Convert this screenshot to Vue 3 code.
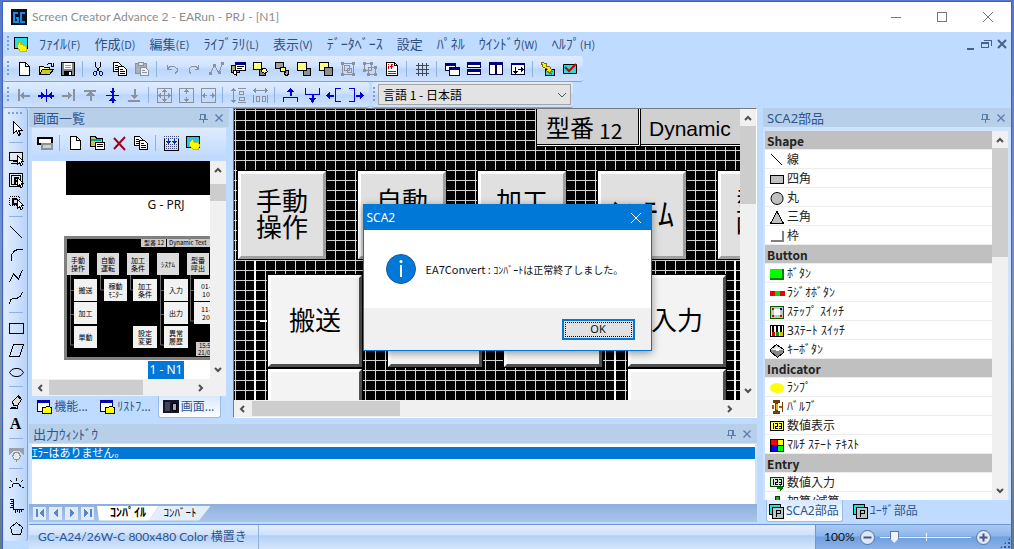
<script setup>
import { h, ref } from 'vue'

const K = '#000'
const G = '#8b929c'
const B = '#0000d8'
const N = 'none'
const Y = '#ffff80'

// Each glyph is a list of [path, fill, stroke, width, dash] on a 16 by 16 grid.
const cursor = ['M9.5 5.5v9l2-2 1.5 3 1.5-1-1-3h2z', '#fff', K]
const glyphs = {
  app: [['M0 0h16v16H0z', '#06101f'], ['M7 3.5H2.5v9H6.5V8.5H4.5M14 3.5H9.5v9H14', N, '#1d8be0', 2]],
  doc: [['M1.5 1.5h13v11h-13z', '#20e0e0', K], ['M4.5 9.5l2-4h1v3l5 1 1 2v4h-6l-3-4z', '#ff0', '#c0c000']],
  new: [['M3.5 1.5h6l4 4v9h-10z', '#fff', K], ['M9.5 1.5v4h4', N, K]],
  open: [['M1.5 13.5v-8h4l1 1h5v3', Y, K], ['M1.5 13.5l3-5h11l-4 5z', '#c8c840', K], ['M9 3.5l2-1h2l1 2M15.5 2v3h-3', N, K]],
  save: [['M1.5 1.5h13v13h-13z', '#80848c', K], ['M4 2h8v6H4z', '#fff'], ['M5 4h6v1H5zM5 6h6v1H5z', '#999'], ['M4 10h8v4H4z', K], ['M9 11h2v3H9z', '#fff']],
  cut: [['M5.5 1v4l4 6M10.5 1v4l-4 6', N, K], ['M4.5 10.5h2v3l-1 1h-1l-1-1v-2zM9.5 10.5h2l1 1v2l-1 1h-1l-1-1z', N, '#000090']],
  copy: [['M1.5 1.5h5l3 3v6h-8z', '#fff', K], ['M3 4.5h3M3 6.5h4M3 8.5h4', N, K], ['M6.5 5.5h5l3 3v6h-8z', '#fff', K], ['M8 8.5h3M8 10.5h5M8 12.5h5', N, K]],
  paste: [['M1.5 2.5h11v10h-11z', '#aab0b8', G], ['M4.5 1.5h5v3h-5z', '#dde', G], ['M6.5 6.5h5l3 3v5h-8z', '#eef', G], ['M8 9.5h3M8 11.5h5', N, G]],
  undo: [['M3.5 4v4h4M4 7.5l2-2h4l3 2v3l-2 2', N, G]],
  redo: [['M12.5 4v4h-4M12 7.5l-2-2H6l-3 2v3l2 2', N, G]],
  poly: [['M3 12L6 4l5 8 3-9', N, G], ['M1 11h3v3H1zM5 3h3v3H5zM10 10h3v3h-3zM13 1h3v3h-3z', G]],
  props: [['M1.5 4.5h8v7h-8z', '#a8a878', K], ['M3.5 9.5h3v5l-3-2z', '#fff', K], ['M5.5 1.5h10v8h-10z', '#fff', K], ['M5 1h11v3H5z', '#000080'], ['M7 5.5h7M7 7.5h5', N, K]],
  front1: [['M7.5 8.5h6v6h-6z', '#808080', K], ['M1.5 1.5h8v7h-8z', Y, K], ['M10.5 7.5h3l2 3-3 2-3-2z', Y, K]],
  back1: [['M1.5 1.5h8v6h-8z', '#a0a0a0', K], ['M6.5 6.5h5v4h-5z', Y, K], ['M11.5 9.5h3v4l-2 1-2-1z', '#a0a0a0', K]],
  front2: [['M7.5 7.5h7v7h-7z', '#909090', K], ['M1.5 1.5h9v8h-9z', Y, K]],
  back2: [['M1.5 1.5h9v8h-9z', Y, K], ['M6.5 6.5h8v8h-8z', '#909090', K]],
  group: [['M2.5 2.5h11v11h-11z', N, G], ['M4.5 4.5h5v5h-5zM7.5 7.5h4v4h-4z', N, G], ['M1 1h3v3H1zM12 1h3v3h-3zM1 12h3v3H1zM12 12h3v3h-3z', G]],
  ungroup: [['M2.5 2.5h7v7h-7zM6.5 6.5h7v7h-7z', N, G], ['M1 1h3v3H1zM8 1h3v3H8zM1 8h3v3H1zM12 5h3v3h-3zM5 12h3v3H5zM12 12h3v3h-3z', G]],
  ifdoc: [['M2.5 1.5h8l3 3v10h-11z', '#fff', K], ['M10.5 1.5v3h3', N, K], ['M4.5 5v3M4.5 3v1M7.5 8V3.5H9M6 5.5h3M4 10.5h8M4 12.5h8', N, '#d00000']],
  grid: [['M2 4.5h13M2 8.5h13M2 12.5h13M4.5 2v13M8.5 2v13M12.5 2v13', N, '#404850']],
  cascade: [['M1.5 2.5h10v7h-10z', '#fff', '#000040'], ['M1 2h11v3H1z', '#000080'], ['M5.5 6.5h10v8h-10z', '#fff', '#000040'], ['M5 6h11v3H5z', '#000080']],
  tileh: [['M1.5 1.5h13v5h-13zM1.5 8.5h13v5h-13z', '#fff', '#000040'], ['M1 1h14v3H1zM1 8h14v3H1z', '#000080']],
  tilev: [['M1.5 1.5h6v12h-6zM8.5 1.5h6v12h-6z', '#fff', '#000040'], ['M1 1h7v3H1zM8 1h7v3H8z', '#000080']],
  fit: [['M1.5 2.5h13v11h-13z', '#fff', '#000040'], ['M1 2h14v2H1z', '#000080'], ['M5.5 6v6M3.5 10l2 2 2-2M8 8.5h5M11 6.5l2 2-2 2', N, K]],
  compile: [['M5.5 8.5h9v6h-9z', '#30d8d8', K], ['M1.5 1.5l5 1v3l3 0 3 5h-2l1 3-5-4 1-1-5-3z', '#ffee00', '#807000']],
  check: [['M1.5 3.5h13v9h-13z', '#30d8d8', K], ['M3 6l4 4 7-7', N, '#d00000', 2]],
  left: [['M2.5 2v12M5 8.5h9', N, G, 2], ['M4 8.5l4-4v8z', G]],
  hcenter: [['M8.5 2v13', N, B], ['M0 8.5h16', N, B, 2], ['M7 8.5L3 5v7zM10 8.5l4-3.5v7z', B]],
  right: [['M13.5 2v12M2 8.5h9', N, G, 2], ['M12 8.5L8 4.5v8z', G]],
  top: [['M2 3.5h12M8.5 5v9', N, G, 2], ['M8.5 4L4 9h9z', G]],
  vcenter: [['M2 8.5h13', N, B], ['M8.5 1v15', N, B, 2], ['M8.5 7L5 3.5h7zM8.5 10L5 13.5h7z', B]],
  bottom: [['M2 13.5h12M8.5 2v9', N, G, 2], ['M8.5 12L5 8h7z', G]],
  sizeb: [['M1.5 1.5h14v14h-14z', N, G], ['M8.5 3v11M3 8.5h11M6.5 5l2-2 2 2M6.5 12l2 2 2-2M5 6.5l-2 2 2 2M12 6.5l2 2-2 2', N, G]],
  sizev: [['M1.5 1.5h14v14h-14z', N, G], ['M8.5 3v4M8.5 10v4M6.5 5l2-2 2 2M6.5 12l2 2 2-2', N, G]],
  sizeh: [['M1.5 1.5h14v14h-14z', N, G], ['M3 8.5h4M10 8.5h4M5 6.5l-2 2 2 2M12 6.5l2 2-2 2', N, G]],
  spacev: [['M3.5 2v13M1.5 4l2-2 2 2M1.5 13l2 2 2-2M8 1.5h8M8 15.5h8M9.5 4.5h4v3h-4zM9.5 10.5h5v3h-5z', N, G]],
  spaceh: [['M2 3.5h13M4 1.5l-2 2 2 2M13 1.5l2 2-2 2M1.5 8v8M15.5 8v8M4.5 9.5h3v5h-3zM10.5 9.5h3v5h-3z', N, G]],
  outup: [['M1.5 15v-5h14v5', N, B], ['M8.5 9V3', N, B, 2], ['M8.5 1L5 5h7z', B]],
  outdown: [['M1.5 1v6h14V1', N, B], ['M8.5 8v5', N, B, 2], ['M8.5 16L5 11h7z', B]],
  outleft: [['M15 1.5H9.5v13H15', N, B], ['M8 8.5H3', N, B, 2], ['M0 8.5L4 5v7z', B]],
  outright: [['M1 1.5h5.5v13H1', N, B], ['M8 8.5h5', N, B, 2], ['M16 8.5L12 5v7z', B]],
  pointer: [['M5.5 1.5v12l3-3 2 5 2-1-2-4h4z', '#fff', K]],
  selscreen: [['M1.5 2.5h13v8h-13z', '#dfe8f5', K], ['M3 13.5h6M5 11.5h4', N, K], cursor],
  selpart: [['M1.5 1.5h13v13h-13zM3.5 3.5h9v9h-9z', '#dfe8f5', K], ['M6.5 12V5.5H10V8.5H7', N, K, 2], cursor],
  selc: [['M1.5 2.5h10v9h-10z', N, K, 1, '1 1'], ['M9 5H5v4.5h4', N, K, 2], cursor],
  line: [['M2 2l12 12', N, K]],
  arc: [['M3.5 15V9l3-4 4-2h4', N, K]],
  zigzag: [['M1.5 14l4-8 5 5 4-9', N, K]],
  curve: [['M1.5 14l1-4 3-2h4l3-2 2-4', N, K]],
  rect: [['M1.5 3.5h14v10h-14z', N, K]],
  para: [['M5.5 2.5h10l-4 12h-10z', N, K]],
  ellipse: [['M1.5 8.5L4 5.5l3-1h3l3 1 2.5 3-2.5 3-3 1H7l-3-1z', N, K]],
  fill: [['M4.5 7.5l5-5 4 3-4 6h-4z', '#ddd', K], ['M10 1.5l3 3M2 14.5h7v-3M3 13.5h5', N, K]],
  text: [],
  spray: [['M1 2h15v7l-5-4H6L1 9z', '#9aa0a8'], ['M6.5 6.5h4l2 4-2 3h-4l-2-3z', '#e8e8e8', G], ['M8.5 13v3', N, G]],
  gauge: [['M4 11l1-3 3-1 3 1 2 3M1 11.5h2M14 11.5h2M8.5 2v3M2 4l2 2M15 4l-2 2', N, K]],
  scale: [['M5.5 1v10.5H16', N, K], ['M2 1.5h3M3 3.5h2M2 5.5h3M3 7.5h2M2 9.5h3M7.5 12v3M9.5 12v2M11.5 12v3M13.5 12v2', N, K]],
  pentagon: [['M8.5 2.5l6 5-2 7h-8l-2-7z', N, K]],
  screens: [['M1 3h14v6H1z', '#fff', K, 2], ['M5 9h10v5H5z', '#d0d0d0', G, 2]],
  prop2: [['M1.5 1.5h5l1 2h6v8h-12z', '#c8c840', K], ['M2 4h10v2H2z', '#00a0a0'], ['M6.5 7.5h9v7h-9z', '#fff', K], ['M8 9.5h6M8 11.5h6', N, K]],
  del: [['M3 3l11 12M14 2L3 14', N, '#a00020', 2]],
  dots: [['M1 1.5h15M1 3.5h15M1 9.5h15M1 11.5h15M1 13.5h15', N, '#404880', 1, '1 1'], ['M1.5 4v11.5h14V4', N, K], ['M5.5 4v2M11.5 4v2', N, '#0030a0'], ['M3 6h5L5.5 9zM9 6h5l-2.5 3z', '#0030a0']],
  hand: [['M1.5 1.5h13v11h-13z', '#20c8e8', K], ['M4.5 7.5l3-3 2 3h4l1 3-1 4h-5l-4-4z', '#ff0', '#c0c000']],
  tree: [['M1.5 1.5h12v11h-12z', '#fff', '#000060'], ['M1 1h13v3H1z', '#0000b0'], ['M6.5 8.5h3l1-1h3l1 1h1v6h-9z', '#ff0', K]],
  screen: [['M0 1h16v13H0z', '#14142a'], ['M2 3h5v9H2z', '#445'], ['M9 4h5v8H9z', '#000'], ['M10 5h3v6h-3z', '#aab']],
  part: [['M1.5 1.5h11v10h-11z', '#20e0e0', K], ['M4.5 4.5h11v11h-11z', '#b8c8c8', K], ['M8.5 14V7.5H12V10.5H9', N, K]],
  sLine: [['M2 2l11 11', N, K]],
  sRect: [['M1.5 4.5h13v8h-13z', '#c0c0c0', K]],
  sCircle: [['M8 2.5a6 6 0 1 0 .1 0z', '#c0c0c0', K]],
  sTri: [['M8 2.5l6.5 12h-13z', '#c0c0c0', K]],
  sFrame: [['M2 13h12V3', N, '#808080', 2]],
  bButton: [['M1 3h14v11H1z', '#008000'], ['M1 3h12v9H1z', '#0f0']],
  bRadio: [['M1 6h5v5H1zM11 6h5v5h-5z', '#f00000'], ['M6 6h5v5H6z', '#00e000']],
  bStep: [['M1.5 2.5h13v12h-13z', '#c0c8c0', '#006000'], ['M5 5h6v6H5z', '#fff'], ['M3 4h2v2H3zM3 11h2v2H3zM11 11h2v2h-2z', '#e00000'], ['M11 4h2v2h-2z', '#0000d0']],
  bState: [['M1.5 2.5h13v11h-13z', '#fff', K], ['M3 3h2v7H3zM7 3h2v7H7zM11 3h2v7h-2z', K], ['M3 9h3v4H3z', '#e00000'], ['M7 9h3v4H7z', '#00a000'], ['M11 9h3v4h-3z', '#e0c000']],
  bKey: [['M1.5 7.5l6-5 7 5-6 6z', '#ddd', K], ['M1.5 7.5v2l7 6 6-5v-2', '#888', K], ['M5 7.5l3-2 3 2-3 2z', '#fff']],
  iLamp: [['M8 3a7 5 0 1 0 .1 0z', '#ff0']],
  iValve: [['M4 1h7v3H9v8h2v3H4v-3h2V4H4z', '#704000'], ['M7 5h2v6H7z', '#e0b000'], ['M3 6h2v4H3zM10 7h3v2h-3z', '#a86000'], ['M13 3h1v10h-1z', '#704000']],
  iNum: [['M1.5 3.5h13v9h-13z', '#ffff60', K], ['M4.5 5v6M6 5.5h2.5v2.5H6.5v2.5H9M10 5.5h2.5v5H10M10 8h2', N, K]],
  iMulti: [['M1 2h14v13H1z', K], ['M2 3h6v5H2z', '#f00'], ['M9 3h5v5H9z', '#ff0'], ['M2 9h6v5H2z', '#00f'], ['M9 9h5v5H9z', '#0f0']],
  eNum: [['M1.5 2.5h13v9h-13z', '#d8e8d8', '#004000'], ['M4.5 4v6M6 4.5h2.5v2.5H6.5v2.5H9M10 4.5h2.5v5H10M10 7h2', N, K], ['M8 12h3v-2l3 3-3 3v-2H8z', '#008000']],
  eAdd: [['M6 2h4v4h4v4h-4v4H6v-4H2V6h4z', '#30a030', '#004000']],
  pin: [['M5.5 4v5M10.5 4v5M5 4.5h6M4 9.5h9M8.5 10v3M9.5 5v4', N, '#5a7cae']],
  x: [['M4.5 4.5l7 7M11.5 4.5l-7 7', N, '#5a7cae', 1.3]],
  up: [['M5 10l3-3 3 3', N, '#505050', 2]],
  down: [['M5 6l3 3 3-3', N, '#505050', 2]],
  prev: [['M10 5L7 8l3 3', N, '#505050', 2]],
  next: [['M6 5l3 3-3 3', N, '#505050', 2]],
  first: [['M4 4h2v8H4zM12 4v8L7 8z', '#5c86bf']],
  back: [['M10 4v8L5 8z', '#5c86bf']],
  fwd: [['M6 4v8l5-4z', '#5c86bf']],
  last: [['M10 4h2v8h-2zM4 4v8l5-4z', '#5c86bf']],
  min: [['M3 8.5h10', N, '#777']],
  max: [['M3.5 3.5h9v9h-9z', N, '#777']],
  close: [['M3 3l10 10M13 3L3 13', N, '#777']],
  mMin: [['M5 12h7v2H5z', '#44618f']],
  mRest: [['M6.5 4.5h7v5M3.5 6.5h7v5h-7z', N, '#44618f'], ['M6 4h8v1H6zM3 6h8v2H3z', '#44618f']],
  mX: [['M4 4l8 8M12 4l-8 8', N, '#44618f', 2]],
}
const smooth = new Set(['x', 'close', 'mX', 'up', 'down', 'prev', 'next', 'del', 'sCircle', 'iLamp', 'check', 'ellipse'])

const Ico = ({ name }) =>
  h('svg', {
    class: 'ico', viewBox: '0 0 16 16', width: 16, height: 16, 'aria-hidden': 'true',
    'shape-rendering': smooth.has(name) ? 'auto' : 'crispEdges',
  }, glyphs[name].map(([d, fill, stroke, w, dash]) =>
    h('path', { d, fill, stroke, 'stroke-width': w || 1, 'stroke-dasharray': dash })))
Ico.props = ['name']

const menus = [
  ['ﾌｧｲﾙ', '(F)', true], ['作成', '(D)'], ['編集', '(E)'], ['ﾗｲﾌﾞﾗﾘ', '(L)', true], ['表示', '(V)'],
  ['ﾃﾞｰﾀﾍﾞｰｽ', '', true], ['設定', ''], ['ﾊﾟﾈﾙ', '', true], ['ｳｲﾝﾄﾞｳ', '(W)', true], ['ﾍﾙﾌﾟ', '(H)', true],
]
const bar1 = 'new open save | cut copy paste | undo redo poly props front1 back1 front2 back2 group ungroup ifdoc | grid | cascade tileh tilev fit | compile check'.split(' ')
const bar2 = 'left hcenter right top vcenter bottom | sizeb sizev sizeh | spacev spaceh | outup outdown outleft outright'.split(' ')
const tools = 'pointer | selscreen selpart selc | line arc zigzag curve | rect para ellipse | fill text | spray | gauge scale pentagon'.split(' ')
const panelBar = 'screens | new prop2 del copy | dots hand'.split(' ')

const parts = [
  ['Shape'], ['線', 'sLine'], ['四角', 'sRect'], ['丸', 'sCircle'], ['三角', 'sTri'], ['枠', 'sFrame'],
  ['Button'], ['ﾎﾞﾀﾝ', 'bButton'], ['ﾗｼﾞｵﾎﾞﾀﾝ', 'bRadio'], ['ｽﾃｯﾌﾟ ｽｲｯﾁ', 'bStep'], ['3ｽﾃｰﾄ ｽｲｯﾁ', 'bState'], ['ｷｰﾎﾞﾀﾝ', 'bKey'],
  ['Indicator'], ['ﾗﾝﾌﾟ', 'iLamp'], ['ﾊﾞﾙﾌﾞ', 'iValve'], ['数値表示', 'iNum'], ['ﾏﾙﾁ ｽﾃｰﾄ ﾃｷｽﾄ', 'iMulti'],
  ['Entry'], ['数値入力', 'eNum'], ['加算/減算', 'eAdd'],
]

// Screen keys on the drawing surface: x, y, width, height, lines, baseline of the first line, lower row
const keys = [
  [4, 62, 88, 88, ['手動', '操作'], 40], [124, 62, 88, 88, ['自動'], 40], [244, 62, 88, 88, ['加工'], 40],
  [364, 62, 88, 88, ['ｼｽﾃﾑ'], 55], [484, 62, 88, 88, ['型番', '呼出'], 40],
  [34, 166, 94, 92, ['搬送'], 55, true], [154, 166, 94, 92, [], 0, true], [270, 166, 98, 92, [], 0, true], [394, 166, 98, 92, ['入力'], 55, true],
  [34, 260, 94, 92, [], 0, true], [394, 260, 98, 92, [], 0, true],
]
const minis = [
  [3, 17, 22, ['手動', '操作'], 1], [33, 17, 22, ['自動', '運転'], 1], [63, 17, 22, ['加工', '条件'], 1], [93, 17, 22, ['ｼｽﾃﾑ'], 1], [123, 17, 22, ['型番', '呼出'], 1],
  [10, 43, 23, ['搬送']], [40, 43, 23, ['稼動', 'ﾓﾆﾀｰ']], [69, 43, 24, ['加工', '条件']], [100, 43, 24, ['入力']], [130, 43, 24, ['01-', '10']],
  [10, 66, 23, ['加工']], [100, 66, 24, ['出力']], [130, 66, 24, ['11-', '20']],
  [10, 90, 23, ['単動']], [69, 90, 24, ['設定', '変更']], [100, 90, 24, ['異常', '履歴']],
]
const language = ref('ja')
const zoom = ref(12)
</script>

<template>
  <div class="desk">
    <div class="win">
      <header class="title">
        <Ico name="app" />
        <h1>Screen Creator Advance 2 - EARun - PRJ - [N1]</h1>
        <button aria-label="Minimize"><Ico name="min" /></button>
        <button aria-label="Maximize"><Ico name="max" /></button>
        <button aria-label="Close"><Ico name="close" /></button>
      </header>

      <nav class="menu">
        <i class="grip"></i>
        <Ico name="doc" />
        <button v-for="m in menus" :key="m[0]" class="item"><span :class="{ kana: m[2] }">{{ m[0] }}</span><small v-if="m[1]">{{ m[1] }}</small></button>
        <div class="mdi">
          <button aria-label="Minimize document"><Ico name="mMin" /></button>
          <button aria-label="Restore document"><Ico name="mRest" /></button>
          <button aria-label="Close document"><Ico name="mX" /></button>
        </div>
      </nav>

      <div class="bars">
        <div class="bar">
          <i class="grip"></i>
          <template v-for="(t, i) in bar1" :key="i">
            <i v-if="t === '|'" class="sep"></i>
            <button v-else class="tool" :aria-label="t"><Ico :name="t" /></button>
          </template>
        </div>
      </div>
      <div class="bars">
        <div class="bar">
          <i class="grip"></i>
          <template v-for="(t, i) in bar2" :key="i">
            <i v-if="t === '|'" class="sep"></i>
            <button v-else class="tool" :aria-label="t"><Ico :name="t" /></button>
          </template>
        </div>
        <div class="bar lang">
          <i class="grip"></i>
          <div class="combo">
            <select v-model="language" aria-label="言語"><option value="ja">言語 1 - 日本語</option></select>
            <svg width="10" height="6" viewBox="0 0 10 6" aria-hidden="true"><path d="M1 1l4 4 4-4" fill="none" stroke="#555" /></svg>
          </div>
        </div>
      </div>

      <div class="work">
        <aside class="toolbox">
          <i class="hgrip"></i>
          <template v-for="(t, i) in tools" :key="i">
            <i v-if="t === '|'" class="hsep"></i>
            <button v-else class="tool" :aria-label="t"><b v-if="t === 'text'">A</b><Ico v-else :name="t" /></button>
          </template>
        </aside>

        <div class="rest">
          <div class="body">
            <div class="center">
              <div class="upper">
                <section class="panel screens">
                  <h2 class="head">画面一覧<button aria-label="Pin"><Ico name="pin" /></button><button aria-label="Close"><Ico name="x" /></button></h2>
                  <div class="pbar">
                    <template v-for="(t, i) in panelBar" :key="i">
                      <i v-if="t === '|'" class="sep"></i>
                      <button v-else class="tool" :aria-label="t"><Ico :name="t" /></button>
                    </template>
                  </div>
                  <div class="browser">
                    <div class="thumbs">
                      <figure>
                        <div class="blank"></div>
                        <figcaption>G - PRJ</figcaption>
                      </figure>
                      <figure>
                        <svg class="mini" width="204" height="124">
                          <rect width="204" height="124" fill="#808080" />
                          <rect x="3" y="3" width="198" height="118" fill="#000" />
                          <path d="M6.5 38v71h4M36.5 38v16h4M66.5 38v16h4M96.5 38v71h4M126.5 38v47h4M6 54.5h4M6 78.5h4M96 54.5h4M96 78.5h4M126 54.5h4" fill="none" stroke="#666" />
                          <rect x="77" y="3" width="25" height="8" fill="#ccc" /><rect x="103" y="3" width="60" height="8" fill="#ccc" />
                          <text x="80" y="9" font-size="6">型番 12</text>
                          <text x="105" y="9" font-size="6">Dynamic Text</text>
                          <g v-for="(m, i) in minis" :key="i">
                            <rect :x="m[0]" :y="m[1]" :width="m[2]" height="22" :fill="m[4] ? '#dcdcdc' : '#f2f2f2'" />
                            <text v-for="(t, j) in m[3]" :key="j" :x="m[0] + m[2] / 2" :y="m[1] + (m[3].length > 1 ? 10 + j * 8 : 14)" font-size="7" text-anchor="middle">{{ t }}</text>
                          </g>
                          <rect x="132" y="106" width="40" height="14" fill="#ccc" />
                          <text x="135" y="112" font-size="6">15:59</text><text x="134" y="119" font-size="6">21/09</text>
                        </svg>
                        <figcaption><mark>1 - N1</mark></figcaption>
                      </figure>
                    </div>
                    <div class="vs"><Ico name="up" /><i class="t1"></i><i class="fillr"></i><Ico name="down" /></div>
                  </div>
                  <div class="hs"><Ico name="prev" /><i class="t2"></i><i class="fillr"></i><Ico name="next" /></div>
                  <div class="tabs" role="tablist">
                    <button role="tab"><Ico name="tree" />機能...</button>
                    <button role="tab"><Ico name="tree" />ﾘｽﾄﾌ...</button>
                    <button role="tab" class="on" aria-selected="true"><Ico name="screen" />画面...</button>
                  </div>
                </section>

                <main class="canvas">
                  <div class="sheet">
                    <svg width="100%" height="100%" class="draw">
                      <rect width="100%" height="100%" fill="#000" />
                      <g fill="#d4d4d4" shape-rendering="crispEdges">
                        <rect v-for="n in 120" :key="'v' + n" :x="n * 10 - 9" y="0" width="1" height="100%" />
                        <rect v-for="n in 80" :key="'h' + n" x="0" :y="n * 10 - 9" width="100%" height="1" />
                      </g>
                      <path d="M21 152v150M381 240v62M501 152v150M26 212h8" stroke="#fff" stroke-width="2" fill="none" />
                      <path d="M302 0h204v38H302z" fill="#000" />
                      <path d="M303 36.5h102.5V0M407 36.5h99" stroke="#fff" fill="none" />
                      <path d="M303 0h101v35H303zM407 0h99v35H407z" fill="#d0d0d0" />
                      <text x="312" y="28" font-size="24">型番</text>
                      <text x="365" y="30" font-size="21">12</text>
                      <text x="415" y="27" font-size="21" class="latin">Dynamic</text>
                      <g v-for="(k, i) in keys" :key="i">
                        <rect :x="k[0] - 1" :y="k[1] - 1" :width="k[2] + 2" :height="k[3] + 2" fill="#000" />
                        <rect :x="k[0]" :y="k[1]" :width="k[2]" :height="k[3]" :fill="k[6] ? '#505050' : '#a0a0a0'" />
                        <path :d="`M${k[0]} ${k[1]}h${k[2]}l-3 3v${k[3] - 6}H${k[0] + 3}l-3 3z`" fill="#fff" />
                        <rect :x="k[0] + 3" :y="k[1] + 3" :width="k[2] - 6" :height="k[3] - 6" :fill="k[6] ? '#f3f3f3' : '#e0e0e0'" />
                        <text v-for="(t, j) in k[4]" :key="j" text-anchor="middle" :x="k[0] + k[2] / 2" :font-size="t.length > 2 ? 32 : 26" :y="k[1] + k[5] + j * 26">{{ t }}</text>
                      </g>
                    </svg>
                    <div class="vs"><Ico name="up" /><i class="t3"></i><i class="fillr"></i><Ico name="down" /></div>
                  </div>
                  <div class="hs"><Ico name="prev" /><i class="t4"></i><i class="fillr"></i><Ico name="next" /></div>
                </main>
              </div>

              <section class="panel output">
                <h2 class="head">出力ｳｨﾝﾄﾞｳ<button aria-label="Pin"><Ico name="pin" /></button><button aria-label="Close"><Ico name="x" /></button></h2>
                <div class="log"><p>ｴﾗｰはありません。</p></div>
                <div class="sheets">
                  <button v-for="n in ['first', 'back', 'fwd', 'last']" :key="n" class="nav" :aria-label="n"><Ico :name="n" /></button>
                  <button class="stab on">ｺﾝﾊﾟｲﾙ</button>
                  <button class="stab">ｺﾝﾊﾞｰﾄ</button>
                </div>
              </section>
            </div>

            <section class="panel library">
              <h2 class="head">SCA2部品<button aria-label="Pin"><Ico name="pin" /></button><button aria-label="Close"><Ico name="x" /></button></h2>
              <div class="listbox">
                <ul>
                  <li v-for="p in parts" :key="p[0]" :class="{ cat: !p[1] }"><Ico v-if="p[1]" :name="p[1]" />{{ p[0] }}</li>
                </ul>
                <div class="vs"><Ico name="up" /><i class="t5"></i><i class="fillr"></i><Ico name="down" /></div>
              </div>
              <div class="tabs" role="tablist">
                <button role="tab" class="on" aria-selected="true"><Ico name="part" />SCA2部品</button>
                <button role="tab"><Ico name="part" />ﾕｰｻﾞ部品</button>
              </div>
            </section>
          </div>

          <footer class="status">
            <span class="model">GC-A24/26W-C 800x480 Color 横置き</span>
            <div class="zoom">
              <span>100%</span>
              <button aria-label="Zoom out"><svg width="17" height="17" viewBox="0 0 17 17"><circle cx="8.5" cy="8.5" r="7" fill="#dce8f8" stroke="#56709a" /><path d="M4.5 8.5h8" stroke="#44587a" stroke-width="2" /></svg></button>
              <div class="range"><input v-model="zoom" type="range" min="0" max="100" aria-label="Zoom" /></div>
              <button aria-label="Zoom in"><svg width="17" height="17" viewBox="0 0 17 17"><circle cx="8.5" cy="8.5" r="7" fill="#dce8f8" stroke="#56709a" /><path d="M4.5 8.5h8M8.5 4.5v8" stroke="#44587a" stroke-width="2" /></svg></button>
              <i class="size"></i>
            </div>
          </footer>
        </div>
      </div>
    </div>

    <div class="overlay">
      <section class="dialog" role="dialog" aria-labelledby="dlg">
        <h2 id="dlg">SCA2<button aria-label="Close"><svg width="12" height="12" viewBox="0 0 12 12"><path d="M1 1l10 10M11 1L1 11" stroke="#fff" /></svg></button></h2>
        <div class="msg">
          <svg width="32" height="32" viewBox="0 0 32 32" aria-hidden="true"><circle cx="16" cy="16" r="14.5" fill="#0078d7" stroke="#1a5a96" /><path d="M16 12v12" stroke="#fff" stroke-width="2" /><circle cx="16" cy="8.5" r="1.5" fill="#fff" /></svg>
          <p><span>EA7Convert : </span>ｺﾝﾊﾞｰﾄは正常終了しました。</p>
        </div>
        <div class="foot"><button class="ok">OK</button></div>
      </section>
    </div>
  </div>
</template>

<style>
body { margin: 0; overflow: hidden; }
</style>

<style scoped>
.desk { position: relative; height: 100vh; box-sizing: border-box; padding: 2px 3px 0; background: linear-gradient(#5578cc, #6f8ed8 40%, #8094ae 60%, #66788c); font: 12px/16px "Noto Sans", "Noto Sans CJK JP", sans-serif; color: #111; }
.desk * { box-sizing: border-box; }
.win { display: flex; flex-direction: column; height: 100%; background: #bfdbff; box-shadow: 0 0 0 1px #3f64b8; }
button { border: 0; padding: 0; margin: 0; background: none; font: inherit; color: inherit; display: flex; align-items: center; justify-content: center; flex: none; }
h1, h2, p, ul, figure { margin: 0; padding: 0; font-size: inherit; font-weight: normal; }
.ico { display: block; flex: none; }
.title { flex: none; height: 30px; display: flex; align-items: center; background: #fff; padding-left: 8px; }
.title h1 { flex: 1; margin-left: 5px; color: #8d8d8d; font-family: Lato, sans-serif; font-size: 12px; white-space: nowrap; }
.title button { width: 46px; height: 28px; }
.menu { flex: none; height: 24px; display: flex; align-items: center; color: #2f4f80; }
.menu .item { margin-left: 14px; white-space: nowrap; font-size: 13px; }
.menu .ico + .item { margin-left: 10px; }
.menu small { font-size: 11px; font-family: "Noto Sans CJK JP", sans-serif; }
.menu .kana { font-size: 14px; }
.mdi { margin-left: auto; display: flex; padding-right: 1px; }
.grip { flex: none; width: 2px; height: 16px; margin: 0 4px; background: repeating-linear-gradient(#7c9fd3 0 2px, transparent 2px 4px); }
.bars { flex: none; height: 26px; display: flex; gap: 3px; }
.bar { display: flex; align-items: center; height: 26px; padding-right: 2px; background: linear-gradient(#dfecff, #d0e3ff 40%, #bcd6fb 55%, #cfe2ff); border-bottom: 1px solid #7ba3dc; border-radius: 3px; }
.tool { width: 22px; height: 22px; }
.sep { width: 8px; height: 16px; flex: none; background: linear-gradient(#8fb2e0, #8fb2e0) 3px 0 / 1px 100% no-repeat; }
.lang .grip { margin: 0 3px 0 1px; }
.combo { position: relative; width: 193px; }
.combo select { appearance: none; display: block; width: 100%; height: 21px; border: 1px solid #a5a5a5; background: #e3e3e3; border-radius: 0; padding: 0 4px; margin: 0; color: #000; font: 12px/19px "Noto Sans CJK JP", sans-serif; }
.combo svg { position: absolute; right: 4px; top: 8px; }
.work { flex: 1; min-height: 0; display: flex; }
.toolbox { flex: none; width: 24px; margin: 0 1px 8px 1px; display: flex; flex-direction: column; align-items: center; background: linear-gradient(90deg, #dfecff, #cfe2ff 50%, #b9d3f8); border-right: 1px solid #7ba3dc; border-radius: 3px; }
.toolbox b { font: bold 16px/20px "Liberation Serif", serif; color: #000; }
.hgrip { width: 16px; height: 2px; margin: 4px 0 3px; flex: none; background: repeating-linear-gradient(90deg, #7c9fd3 0 2px, transparent 2px 4px); }
.hsep { width: 14px; height: 8px; flex: none; background: linear-gradient(#8fb2e0, #8fb2e0) 0 3px / 100% 1px no-repeat; }
.rest { flex: 1; min-width: 0; display: flex; flex-direction: column; }
.body { flex: 1; min-height: 0; display: flex; gap: 6px; padding-bottom: 2px; }
.center { flex: 1; min-width: 0; display: flex; flex-direction: column; gap: 6px; }
.upper { flex: 1; min-height: 0; display: flex; gap: 4px; }
.panel { display: flex; flex-direction: column; background: #cfe2ff; }
.head { flex: none; height: 19px; display: flex; align-items: center; padding: 0 2px 0 4px; background: #b8cfe9; color: #2a5592; font-size: 13px; white-space: nowrap; }
.head button { width: 16px; height: 16px; }
.head button:first-of-type { margin-left: auto; }
.screens { flex: none; width: 200px; background: #bfdbff; }
.pbar { flex: none; height: 30px; display: flex; align-items: center; margin: 1px 3px 3px; padding-left: 2px; background: linear-gradient(#dfecff, #c0d9fd); }
.browser { flex: 1; min-height: 0; display: flex; margin: 0 3px; background: #fff; }
.thumbs { flex: 1; overflow: hidden; }
.thumbs figure { width: 204px; margin-left: 32px; }
.thumbs figcaption { text-align: center; height: 41px; padding-top: 1px; line-height: 18px; }
.thumbs mark { display: inline-block; background: #0078d7; color: #fff; padding: 0 2px; }
.blank { height: 34px; margin-left: 2px; background: #000; }
.mini, .draw { display: block; font-family: "Noto Sans CJK JP", sans-serif; }
.vs { flex: none; width: 16px; display: flex; flex-direction: column; padding: 1px 0; background: #f0f0f0; }
.hs { flex: none; height: 17px; display: flex; align-items: center; background: #f0f0f0; }
.vs i, .hs i { display: block; background: #cdcdcd; }
.vs .fillr, .hs .fillr { flex: 1; background: none; }
.hs i { height: 15px; }
.t1 { height: 17px; margin-top: 6px; }
.t2 { width: 94px; margin-left: 1px; }
.t3 { height: 78px; }
.t4 { width: 148px; margin-left: 2px; }
.t5 { height: 109px; }
.screens .hs { margin: 0 3px; padding-right: 17px; }
.tabs { flex: none; display: flex; height: 22px; padding: 0 3px; background: #bfdbff; color: #2a5592; font-size: 12px; }
.tabs button { height: 22px; gap: 2px; padding: 0 6px 0 3px; white-space: nowrap; }
.tabs .on { background: linear-gradient(#d8e8ff, #fff); border: 1px solid #9bbce8; border-top: 0; border-radius: 0 0 3px 3px; padding: 0 3px 0 1px; }
.screens .tabs button { width: 63px; font-size: 12px; }
.canvas { flex: 1; min-width: 0; display: flex; flex-direction: column; border: 1px solid #7a7a7a; border-right-color: #fff; border-bottom-color: #fff; background: #f0f0f0; }
.sheet { flex: 1; min-height: 0; display: flex; }
.draw { flex: 1; min-width: 0; }
.draw .latin { font-family: "Liberation Sans", sans-serif; }
.canvas .hs { padding-right: 18px; }
.output { flex: none; height: 98px; }
.log { flex: 1; background: #fff; border: solid #cfe2ff; border-width: 1px 2px 0 3px; padding-top: 3px; }
.log p { background: #0078d7; color: #fff; font-size: 11px; line-height: 12px; height: 12px; }
.sheets { flex: none; height: 18px; display: flex; align-items: center; gap: 3px; padding-left: 4px; background: linear-gradient(#8fb0dd, #a9c5ea); }
.nav { width: 13px; height: 13px; background: #dfebfb; overflow: hidden; }
.stab { height: 15px; width: 62px; margin-left: -13px; background: #e4eefb; clip-path: polygon(10px 0, 100% 0, calc(100% - 12px) 100%, 0 100%); font-size: 11px; line-height: 14px; color: #000; }
.stab.on { background: #fff; font-weight: bold; font-size: 12px; clip-path: polygon(0 0, 100% 0, calc(100% - 10px) 100%, 2px 100%); margin-left: 0; }
.library { flex: none; width: 248px; background: #cfe2ff; }
.listbox { flex: 1; min-height: 0; display: flex; margin: 4px 3px 0 2px; background: #fff; }
.listbox ul { flex: 1; overflow: hidden; list-style: none; }
.listbox li { height: 19px; display: flex; align-items: center; gap: 2px; padding: 1px 0 0 4px; border-bottom: 1px solid #ececec; white-space: nowrap; color: #222; }
.listbox .cat { background: #c0c0c0; padding-left: 2px; font-weight: bold; font-family: "Noto Sans CJK JP", sans-serif; font-size: 12px; }
.library .tabs { gap: 6px; }
.status { flex: none; height: 25px; display: flex; justify-content: space-between; align-items: stretch; background: linear-gradient(#e3eeff, #cfe1fb 40%, #b4d0f5 45%, #d5e6fd); border-top: 1px solid #6d97d3; color: #2a5592; }
.model { padding: 4px 11px 0 9px; border-right: 1px solid #8fb2e0; white-space: nowrap; font-family: Lato, "Noto Sans CJK JP", sans-serif; }
.zoom { display: flex; align-items: center; gap: 4px; padding-left: 8px; width: 196px; background: linear-gradient(#a8c9f5, #8fb6ea 45%, #6f9fdf 50%, #8bb2ea); color: #111; border-left: 1px solid #6d97d3; }
.zoom > span { width: 31px; font-family: Lato, sans-serif; }
.range { position: relative; flex: 1; height: 20px; }
.range::before { content: ""; position: absolute; left: 50%; top: 6px; width: 1px; height: 8px; background: #eef5ff; }
.range input { position: relative; appearance: none; display: block; width: 100%; height: 20px; margin: 0; background: linear-gradient(#eef5ff, #eef5ff) 0 10px / 100% 1px no-repeat; }
.range input::-webkit-slider-thumb { appearance: none; width: 9px; height: 12px; background: linear-gradient(90deg, #5b759e 1px, #eef4fd 1px 8px, #5b759e 8px); border-top: 1px solid #5b759e; clip-path: polygon(0 0, 100% 0, 100% 60%, 50% 100%, 0 60%); }
.size { width: 12px; height: 12px; align-self: flex-end; margin-left: 3px; background: radial-gradient(circle, #35598f 1px, transparent 1px) 0 0 / 4px 4px; clip-path: polygon(100% 0, 100% 100%, 0 100%); }
.overlay { position: absolute; inset: 6px 0 0; display: flex; align-items: center; justify-content: center; }
.dialog { width: 289px; background: #fff; border: 1px solid #0078d7; box-shadow: 0 2px 8px #0006; }
.dialog h2 { height: 25px; display: flex; align-items: center; justify-content: space-between; padding: 0 9px 0 3px; background: #0078d7; color: #fff; }
.msg { height: 78px; display: flex; align-items: center; gap: 9px; padding-left: 21px; }
.msg svg { flex: none; }
.msg p { white-space: nowrap; font-family: "Noto Sans CJK JP", sans-serif; font-size: 10px; }
.msg span { font-size: 11px; }
.foot { height: 42px; display: flex; justify-content: flex-end; align-items: center; padding-right: 16px; background: #f0f0f0; }
.ok { width: 73px; height: 21px; background: #e1e1e1; border: 2px solid #0078d7; outline: 1px dotted #000; outline-offset: -4px; font-size: 11px; }
</style>
